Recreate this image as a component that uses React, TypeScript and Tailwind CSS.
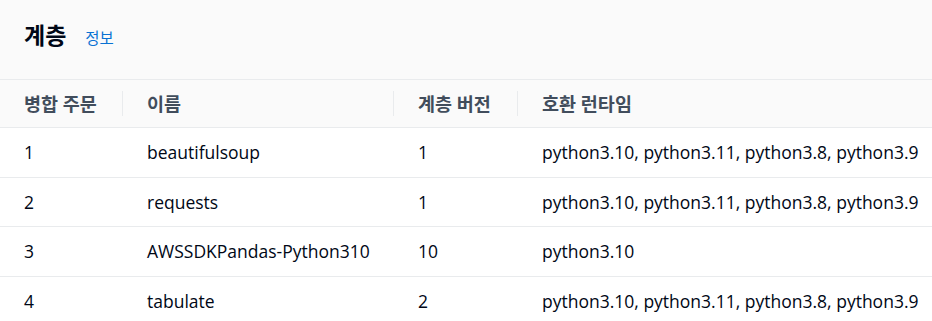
import React from "react";

const rows = [
  ["1", "beautifulsoup", "1", "python3.10, python3.11, python3.8, python3.9"],
  ["2", "requests", "1", "python3.10, python3.11, python3.8, python3.9"],
  ["3", "AWSSDKPandas-Python310", "10", "python3.10"],
  ["4", "tabulate", "2", "python3.10, python3.11, python3.8, python3.9"],
];

const headers = ["병합 주문", "이름", "계층 버전", "호환 런타임"];

export default function App() {
  return (
    <div
      className="w-[932px] h-[321px] overflow-hidden bg-white text-[#000716]"
      style={{ fontFamily: '"Open Sans", "Noto Sans CJK KR", sans-serif' }}
    >
      <div className="h-[80px] bg-[#fafafa] border-b border-[#e9ebed] flex items-center pl-6 pb-[9px]">
        <div className="flex items-baseline">
          <h2 className="text-[23px] font-bold leading-none text-[#000716]">계층</h2>
          <a className="ml-[19px] text-[15.5px] text-[#0972d3] leading-none">정보</a>
        </div>
      </div>
      <div className="grid grid-cols-[122px_271px_124px_1fr] h-[48px] bg-[#fafafa] border-b border-[#e9ebed]">
        {headers.map((h, i) => (
          <div key={i} className="flex items-center">
            {i > 0 && <div className="w-px h-[25px] bg-[#e9ebed]" />}
            <span className="pl-6 text-[18.5px] font-bold text-[#414d5c] whitespace-nowrap">
              {h}
            </span>
          </div>
        ))}
      </div>
      {rows.map((r, ri) => (
        <div
          key={ri}
          className="grid grid-cols-[122px_271px_124px_1fr] h-[49.5px] border-b border-[#e9ebed]"
        >
          {r.map((c, ci) => (
            <div
              key={ci}
              className={`flex items-center text-[17.5px] whitespace-nowrap ${ci === 0 ? "pl-6" : "pl-[25px]"}`}
            >
              {c}
            </div>
          ))}
        </div>
      ))}
    </div>
  );
}
